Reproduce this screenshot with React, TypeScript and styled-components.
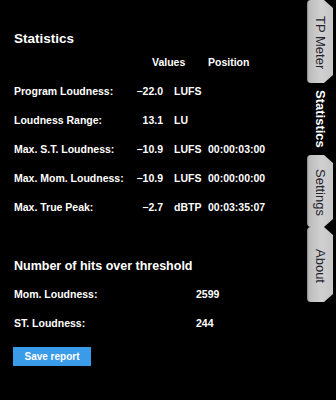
import { Fragment } from 'react';
import styled, { createGlobalStyle } from 'styled-components';

const GlobalStyle = createGlobalStyle`
  body {
    margin: 0;
    background: #000;
  }
`;

const Window = styled.div`
  display: flex;
  height: 400px;
  background: #000;
  font-family: "Liberation Sans", Arial, sans-serif;
  color: #fff;
  overflow: hidden;
`;

const Main = styled.main`
  flex: 1;
  padding: 31px 0 0 14px;
`;

const Title = styled.h1`
  margin: 0;
  font-size: 13.5px;
  line-height: 16px;
  font-weight: bold;
`;

const StatsTable = styled.div`
  display: grid;
  grid-template-columns: 116px 33px 45px 1fr;
  grid-auto-rows: 29px;
  align-items: center;
  font-size: 10.5px;
  font-weight: bold;
  white-space: nowrap;
`;

const ColumnHead = styled.div<{ $wide?: boolean }>`
  grid-column: ${p => (p.$wide ? '2 / span 2' : '4')};
  padding-left: ${p => (p.$wide ? '22px' : '0')};
`;

const Label = styled.div`
  grid-column: 1;
`;

const Value = styled.div`
  text-align: right;
`;

const Unit = styled.div`
  padding-left: 11px;
`;

const Position = styled.div``;

const HitsTitle = styled.h2`
  margin: 37px 0 0;
  font-size: 12.5px;
  line-height: 16px;
  font-weight: bold;
`;

const HitsGrid = styled.div`
  display: grid;
  grid-template-columns: 182px 1fr;
  grid-auto-rows: 29px;
  align-items: center;
  margin-top: 5px;
  font-size: 10.5px;
  font-weight: bold;
`;

const SaveButton = styled.button`
  display: block;
  margin: 10px 0 0 -1px;
  width: 78px;
  height: 19px;
  padding: 0;
  border: none;
  background: #3a9ce9;
  color: #fff;
  font-family: "Liberation Sans", Arial, sans-serif;
  font-size: 10px;
  font-weight: bold;
  cursor: pointer;
`;

const TabColumn = styled.nav`
  display: flex;
  flex-direction: column;
  width: 26px;
  margin-right: 3px;
`;

const Tab = styled.div<{ $active?: boolean; $h: number }>`
  display: flex;
  align-items: center;
  justify-content: center;
  flex: 0 0 ${p => p.$h}px;
  padding-top: ${p => (p.$active ? '0' : '3px')};
  box-sizing: border-box;
  color: ${p => (p.$active ? '#fff' : '#23232b')};
  font-weight: ${p => (p.$active ? 'bold' : 'normal')};
  background: ${p =>
    p.$active
      ? 'transparent'
      : 'linear-gradient(to right, #8a8a8a 0, #bdbdbd 2px, #d0d0d0 55%, #c6c6c6 100%)'};
  border-radius: 4px 0 0 4px;
  clip-path: ${p =>
    p.$active
      ? 'none'
      : 'polygon(0 0, calc(100% - 9px) 0, 100% 8px, 100% calc(100% - 8px), calc(100% - 9px) 100%, 0 100%)'};
`;

const TabLabel = styled.span`
  writing-mode: vertical-rl;
  font-size: 13px;
  line-height: 14px;
  white-space: nowrap;
`;

const stats = [
  { label: 'Program Loudness:', value: '\u221222.0', unit: 'LUFS', pos: '' },
  { label: 'Loudness Range:', value: '13.1', unit: 'LU', pos: '' },
  { label: 'Max. S.T. Loudness:', value: '\u221210.9', unit: 'LUFS', pos: '00:00:03:00' },
  { label: 'Max. Mom. Loudness:', value: '\u221210.9', unit: 'LUFS', pos: '00:00:00:00' },
  { label: 'Max. True Peak:', value: '\u22122.7', unit: 'dBTP', pos: '00:03:35:07' },
];

const hits = [
  { label: 'Mom. Loudness:', count: 2599 },
  { label: 'ST. Loudness:', count: 244 },
];

const tabs = [
  { name: 'TP Meter', h: 83 },
  { name: 'Statistics', h: 72, active: true },
  { name: 'Settings', h: 72 },
  { name: 'About', h: 75 },
];

const App = () => {
  return (
    <Window>
      <GlobalStyle />
      <Main>
        <Title>Statistics</Title>
        <StatsTable>
          <ColumnHead $wide>Values</ColumnHead>
          <ColumnHead>Position</ColumnHead>
          {stats.map(s => (
            <Fragment key={s.label}>
              <Label>{s.label}</Label>
              <Value>{s.value}</Value>
              <Unit>{s.unit}</Unit>
              <Position>{s.pos}</Position>
            </Fragment>
          ))}
        </StatsTable>

        <HitsTitle>Number of hits over threshold</HitsTitle>
        <HitsGrid>
          {hits.map(h => (
            <Fragment key={h.label}>
              <div>{h.label}</div>
              <div>{h.count}</div>
            </Fragment>
          ))}
        </HitsGrid>

        <SaveButton>Save report</SaveButton>
      </Main>

      <TabColumn>
        {tabs.map(t => (
          <Tab key={t.name} $h={t.h} $active={t.active}>
            <TabLabel>{t.name}</TabLabel>
          </Tab>
        ))}
      </TabColumn>
    </Window>
  );
};

export default App;
